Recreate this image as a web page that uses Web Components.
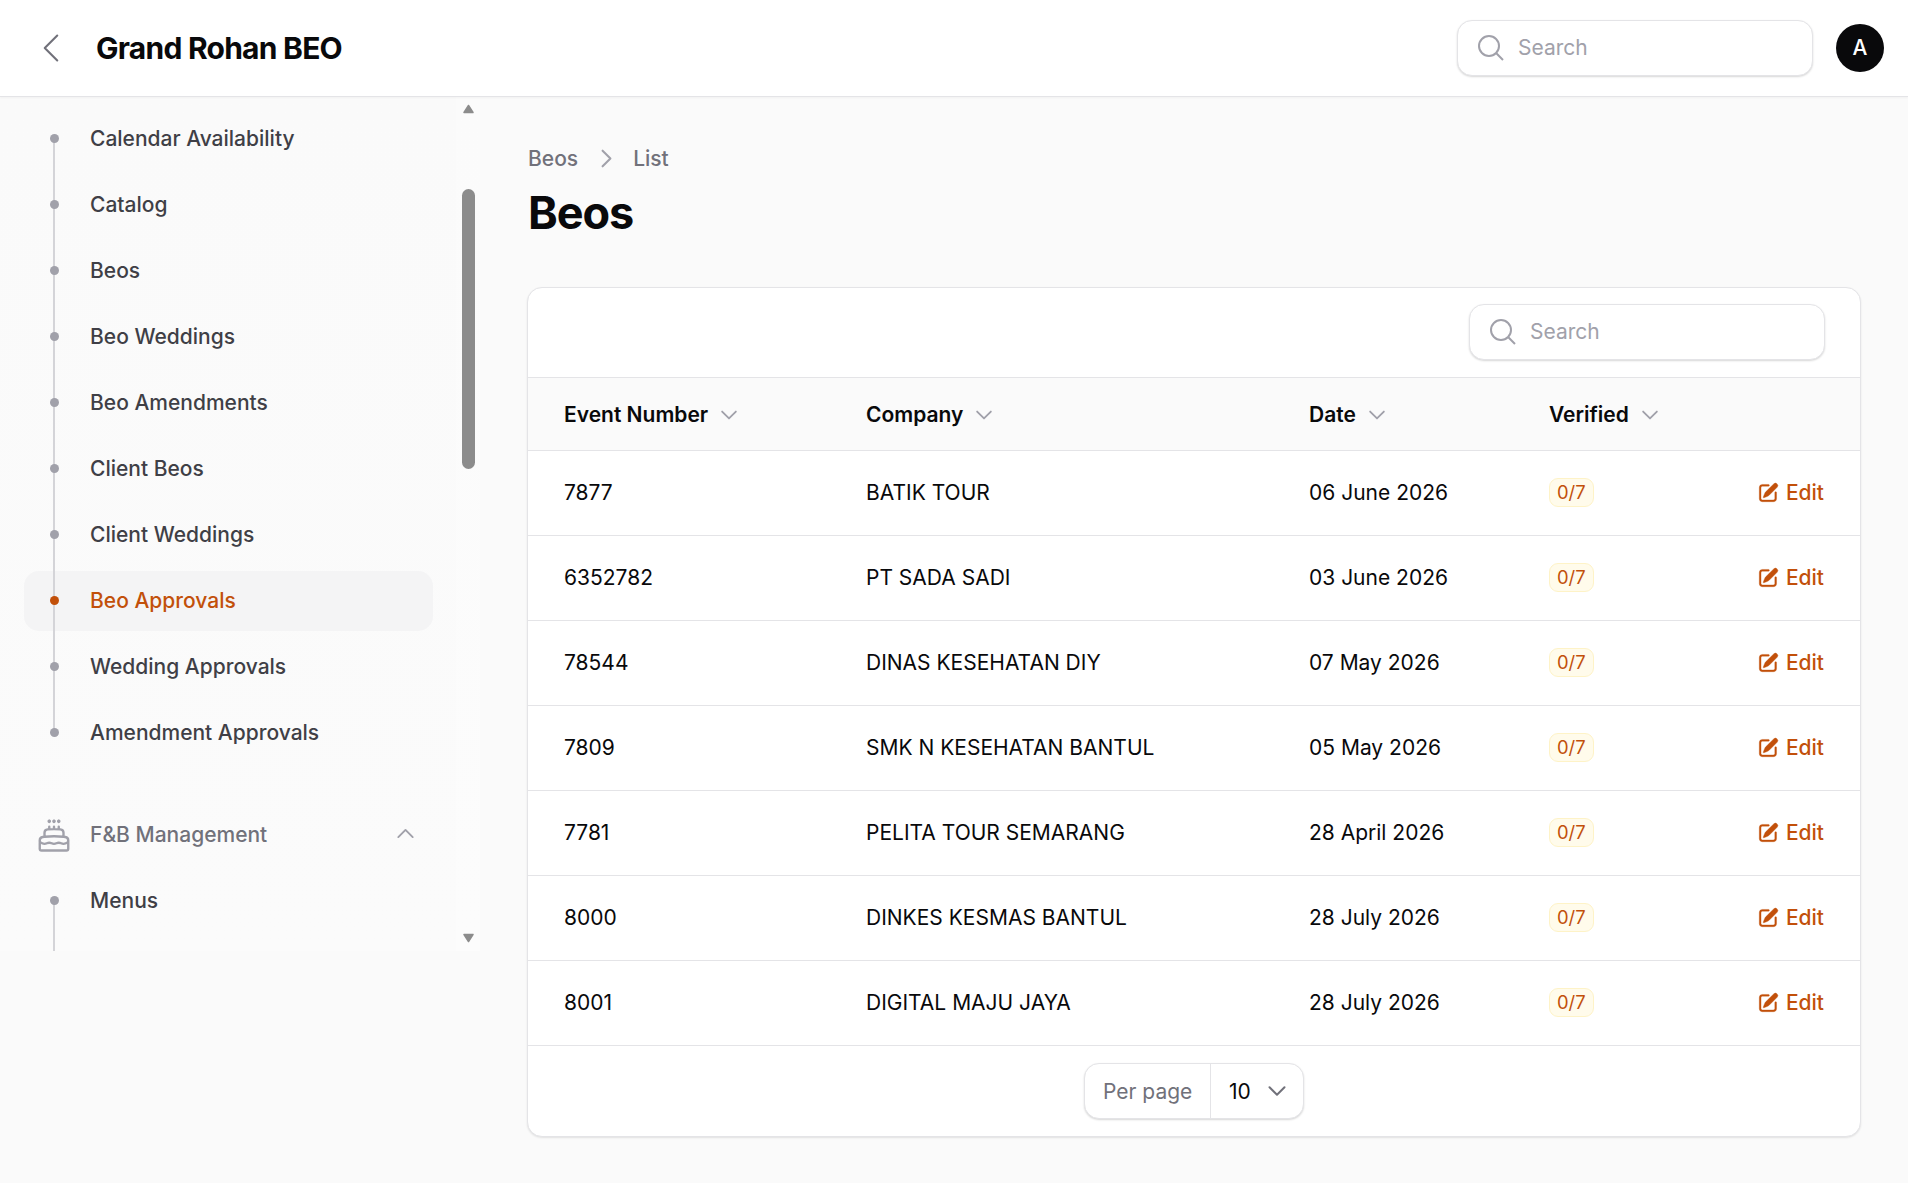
<!DOCTYPE html>
<html>
<head>
<meta charset="utf-8">
<title>Beos</title>
<style>
  html, body { margin: 0; height: 100%; background: #fafafa; overflow: hidden; }
  body { font-family: Inter, "Liberation Sans", sans-serif; font-size: 21px; color: #09090b; }
  .shell { display: flex; }
</style>
</head>
<body>
<app-topbar title="Grand Rohan BEO"></app-topbar>
<div class="shell">
  <side-nav>
    <nav-item first>Calendar Availability</nav-item>
    <nav-item>Catalog</nav-item>
    <nav-item>Beos</nav-item>
    <nav-item>Beo Weddings</nav-item>
    <nav-item>Beo Amendments</nav-item>
    <nav-item>Client Beos</nav-item>
    <nav-item>Client Weddings</nav-item>
    <nav-item active>Beo Approvals</nav-item>
    <nav-item>Wedding Approvals</nav-item>
    <nav-item last>Amendment Approvals</nav-item>
    <nav-group>F&amp;B Management</nav-group>
    <nav-item first tail>Menus</nav-item>
  </side-nav>
  <page-main>
    <beo-table>
      <beo-row head number="Event Number" company="Company" date="Date" verified="Verified"></beo-row>
      <beo-row number="7877" company="BATIK TOUR" date="06 June 2026" verified="0/7"></beo-row>
      <beo-row number="6352782" company="PT SADA SADI" date="03 June 2026" verified="0/7"></beo-row>
      <beo-row number="78544" company="DINAS KESEHATAN DIY" date="07 May 2026" verified="0/7"></beo-row>
      <beo-row number="7809" company="SMK N KESEHATAN BANTUL" date="05 May 2026" verified="0/7"></beo-row>
      <beo-row number="7781" company="PELITA TOUR SEMARANG" date="28 April 2026" verified="0/7"></beo-row>
      <beo-row number="8000" company="DINKES KESMAS BANTUL" date="28 July 2026" verified="0/7"></beo-row>
      <beo-row number="8001" company="DIGITAL MAJU JAYA" date="28 July 2026" verified="0/7"></beo-row>
    </beo-table>
  </page-main>
</div>
<script>
const chevron = (d, size, color, sw) => `<svg width="${size}" height="${size}" viewBox="0 0 24 24" fill="none" stroke="${color}" stroke-width="${sw}" stroke-linecap="round" stroke-linejoin="round"><path d="${d}"/></svg>`;
const CHEV_DOWN = 'm19.5 8.25-7.5 7.5-7.5-7.5';
const CHEV_UP = 'm4.5 15.75 7.5-7.5 7.5 7.5';
const CHEV_LEFT = 'M15.75 19.5 8.25 12l7.5-7.5';
const CHEV_RIGHT = 'm8.25 4.5 7.5 7.5-7.5 7.5';

class SearchBox extends HTMLElement {
  constructor() {
    super();
    this.attachShadow({ mode: 'open' });
    this.shadowRoot.innerHTML = `
      <style>
        :host { display: block; width: 356px; height: 56px; box-sizing: border-box; }
        .box { height: 100%; box-sizing: border-box; display: flex; align-items: center; gap: 11px; padding: 0 0 0 17px;
          background: #fff; border: 1px solid #e4e4e7; border-radius: 15px; box-shadow: 0 1px 2px rgba(0,0,0,.16); }
        svg { flex: none; display: block; }
        span { color: #a1a1aa; font-size: 21px; }
      </style>
      <div class="box">
        <svg width="32" height="32" viewBox="0 0 24 24" fill="none" stroke="#a1a1aa" stroke-width="1.5"><path d="m21 21-5.197-5.197m0 0A7.5 7.5 0 1 0 5.196 5.196a7.5 7.5 0 0 0 10.607 10.607Z"/></svg>
        <span>Search</span>
      </div>`;
  }
}
customElements.define('search-box', SearchBox);

class AppTopbar extends HTMLElement {
  constructor() {
    super();
    this.attachShadow({ mode: 'open' });
    this.shadowRoot.innerHTML = `
      <style>
        :host { display: flex; align-items: center; height: 97px; box-sizing: border-box; background: #fff;
          border-bottom: 1px solid #e4e4e7; padding: 0 24px 1px 31px; box-shadow: 0 1px 2px rgba(0,0,0,.04); position: relative; }
        svg { display: block; flex: none; }
        h1 { margin: 0 0 0 25px; font-size: 30px; font-weight: 700; letter-spacing: -.75px; color: #09090b; flex: 1; }
        .avatar { width: 48px; height: 48px; border-radius: 50%; background: #09090b; color: #fff; margin-left: 23px;
          display: flex; align-items: center; justify-content: center; font-size: 21px; font-weight: 500; }
      </style>
      ${chevron(CHEV_LEFT, 40, '#71717a', 1.25)}
      <h1></h1>
      <search-box></search-box>
      <div class="avatar">A</div>`;
    this.shadowRoot.querySelector('h1').textContent = this.getAttribute('title') || '';
  }
}
customElements.define('app-topbar', AppTopbar);

class SideNav extends HTMLElement {
  constructor() {
    super();
    this.attachShadow({ mode: 'open' });
    this.shadowRoot.innerHTML = `
      <style>
        :host { display: flex; flex: none; width: 480px; height: 854px; }
        nav { width: 456px; box-sizing: border-box; padding: 12px 23px 0 24px; overflow: hidden; display: flex; flex-direction: column; gap: 6px;
          background: linear-gradient(#fafafa, #fbfbfb); }
        .bar { width: 24px; box-sizing: border-box; padding-left: 1px; background: linear-gradient(#fbfbfb, #fcfcfc); display: flex; flex-direction: column; align-items: center; }
        .bar svg { display: block; flex: none; }
        .up { margin-top: 7px; }
        .down { margin-top: auto; margin-bottom: 8px; }
        .thumb { width: 13px; height: 280px; margin-top: 75px; border-radius: 7px; background: #8c8c8c; flex: none; }
      </style>
      <nav><slot></slot></nav>
      <div class="bar">
        <svg class="up" width="13" height="10" viewBox="0 0 13 10"><path d="M6.5 1.5 11 8.5H2Z" fill="#8c8c8c" stroke="#8c8c8c" stroke-width="1.5" stroke-linejoin="round"/></svg>
        <div class="thumb"></div>
        <svg class="down" width="13" height="10" viewBox="0 0 13 10"><path d="M6.5 8.5 11 1.5H2Z" fill="#8c8c8c" stroke="#8c8c8c" stroke-width="1.5" stroke-linejoin="round"/></svg>
      </div>`;
  }
}
customElements.define('side-nav', SideNav);

class NavItem extends HTMLElement {
  constructor() {
    super();
    this.attachShadow({ mode: 'open' });
    this.shadowRoot.innerHTML = `
      <style>
        :host { display: flex; align-items: center; height: 60px; box-sizing: border-box; padding: 0 0 2px 66px; flex: none; border-radius: 15px;
          position: relative; color: #3f3f46; font-size: 21px; font-weight: 500; }
        :host([active]) { background: #f4f4f5; color: #c2500a; }
        .line { position: absolute; left: 29px; width: 2px; top: -3px; bottom: -3px; background: #d4d4d8; }
        :host([first]) .line { top: 50%; }
        :host([last]) .line { bottom: 50%; }
        :host([tail]) .line { bottom: -60px; }
        .dot { position: absolute; left: 26px; top: 50%; width: 9px; height: 9px; margin-top: -5px; border-radius: 50%; background: #a1a1aa; }
        :host([active]) .dot { background: #c2500a; }
      </style>
      <span class="line"></span><span class="dot"></span><slot></slot>`;
  }
}
customElements.define('nav-item', NavItem);

class NavGroup extends HTMLElement {
  constructor() {
    super();
    this.attachShadow({ mode: 'open' });
    this.shadowRoot.innerHTML = `
      <style>
        :host { display: flex; align-items: center; height: 60px; flex: none; margin-top: 36px; color: #71717a; font-size: 21px; font-weight: 500; }
        svg { display: block; flex: none; }
        .cake { margin: 0 17px 0 11px; }
        .label { flex: 1; margin-top: -2px; }
        .toggle { margin: -3px 16px 0 0; }
      </style>
      <svg class="cake" width="38" height="38" viewBox="0 0 24 24" fill="none" stroke="#a1a1aa" stroke-width="1.5" stroke-linecap="round" stroke-linejoin="round"><path d="M12 8.25v-1.5m0 1.5c-1.355 0-2.697.056-4.024.166C6.845 8.51 6 9.473 6 10.608v2.513m6-4.871c1.355 0 2.697.056 4.024.166C17.155 8.51 18 9.473 18 10.608v2.513M15 8.25v-1.5m-6 1.5v-1.5m12 9.75-1.5.75a3.354 3.354 0 0 1-3 0 3.354 3.354 0 0 0-3 0 3.354 3.354 0 0 1-3 0 3.354 3.354 0 0 0-3 0 3.354 3.354 0 0 1-3 0L3 16.5m15-3.379a48.474 48.474 0 0 0-6-.371c-2.032 0-4.034.126-6 .371m12 0c.39.049.777.102 1.163.16 1.07.16 1.837 1.094 1.837 2.175v5.169c0 .621-.504 1.125-1.125 1.125H4.125A1.125 1.125 0 0 1 3 20.625v-5.17c0-1.08.768-2.014 1.837-2.174A47.78 47.78 0 0 1 6 13.12M12.265 3.11a.375.375 0 1 1-.53 0L12 2.845l.265.265Zm-3 0a.375.375 0 1 1-.53 0L9 2.845l.265.265Zm6 0a.375.375 0 1 1-.53 0L15 2.845l.265.265Z"/></svg>
      <span class="label"><slot></slot></span>
      <span class="toggle">${chevron(CHEV_UP, 23, '#a1a1aa', 2)}</span>`;
  }
}
customElements.define('nav-group', NavGroup);

class PageMain extends HTMLElement {
  constructor() {
    super();
    this.attachShadow({ mode: 'open' });
    this.shadowRoot.innerHTML = `
      <style>
        :host { display: block; flex: 1; min-width: 0; padding: 49px 47px 0 48px; }
        .crumbs { display: flex; align-items: center; height: 25px; gap: 15px; color: #71717a; font-size: 21px; font-weight: 500; }
        .crumbs svg { display: block; margin: 0 -1px 0 1px; }
        h2 { margin: 17px 0 0; font-size: 45px; line-height: 50px; font-weight: 700; letter-spacing: -1.1px; color: #09090b; }
        .body { margin-top: 49px; }
      </style>
      <div class="crumbs"><span>Beos</span>${chevron(CHEV_RIGHT, 25, '#a1a1aa', 2)}<span>List</span></div>
      <h2>Beos</h2>
      <div class="body"><slot></slot></div>`;
  }
}
customElements.define('page-main', PageMain);

class BeoTable extends HTMLElement {
  constructor() {
    super();
    this.attachShadow({ mode: 'open' });
    this.shadowRoot.innerHTML = `
      <style>
        :host { display: block; margin-left: -1px; background: #fff; border: 1px solid #e4e4e7; border-radius: 15px; box-shadow: 0 1px 2px rgba(0,0,0,.1); overflow: hidden; }
        .tools { display: flex; justify-content: flex-end; align-items: center; height: 89px; box-sizing: content-box; padding-right: 35px; border-bottom: 1px solid #e4e4e7; }
        .tools search-box { margin-top: -2px; }
        .foot { display: flex; justify-content: center; align-items: center; height: 90px; }
      </style>
      <div class="tools"><search-box></search-box></div>
      <slot></slot>
      <div class="foot"><per-page></per-page></div>`;
  }
}
customElements.define('beo-table', BeoTable);

class BeoRow extends HTMLElement {
  constructor() {
    super();
    this.attachShadow({ mode: 'open' });
    const head = this.hasAttribute('head');
    const cell = name => {
      const t = this.getAttribute(name);
      return head ? `<div class="cell sort"><b>${t}</b>${chevron(CHEV_DOWN, 22, '#a1a1aa', 2)}</div>` : `<div class="cell">${t}</div>`;
    };
    const verified = head ? cell('verified') : `<div class="cell"><span class="badge">${this.getAttribute('verified')}</span></div>`;
    const action = head ? '<div></div>' : `<div class="cell edit"><svg width="23" height="23" viewBox="0 0 20 20" fill="currentColor" stroke="currentColor" stroke-width=".3"><path d="m5.433 13.917 1.262-3.155A4 4 0 0 1 7.58 9.42l6.92-6.918a2.121 2.121 0 0 1 3 3l-6.92 6.918c-.383.383-.84.685-1.343.886l-3.154 1.262a.5.5 0 0 1-.65-.65Z"/><path d="M3.5 5.75c0-.69.56-1.25 1.25-1.25H10A.75.75 0 0 0 10 3H4.75A2.75 2.75 0 0 0 2 5.75v9.5A2.75 2.75 0 0 0 4.75 18h9.5A2.75 2.75 0 0 0 17 15.25V10a.75.75 0 0 0-1.5 0v5.25c0 .69-.56 1.25-1.25 1.25h-9.5c-.69 0-1.25-.56-1.25-1.25v-9.5Z"/></svg><span>Edit</span></div>`;
    this.shadowRoot.innerHTML = `
      <style>
        :host { display: grid; grid-template-columns: 302px 443px 240px 1fr auto; align-items: center; height: 85px; box-sizing: border-box;
          padding: 0 36px 2px; border-bottom: 1px solid #e4e4e7; font-size: 21px; color: #09090b; }
        :host([head]) { height: 73px; padding-bottom: 0; background: #fafafa; }
        .cell { display: flex; align-items: center; white-space: nowrap; }
        .sort { gap: 10px; }
        .sort svg { margin-top: 2px; }
        b { font-weight: 600; }
        .badge { box-sizing: border-box; height: 29px; padding: 0 7px; display: inline-flex; align-items: center; border: 1px solid #fef3c7;
          border-radius: 9px; background: #fffbeb; color: #c2500a; font-size: 18.4px; }
        .edit { gap: 6px; color: #c2500a; font-weight: 500; }
        svg { display: block; flex: none; }
      </style>
      ${cell('number')}${cell('company')}${cell('date')}${verified}${action}`;
  }
}
customElements.define('beo-row', BeoRow);

class PerPage extends HTMLElement {
  constructor() {
    super();
    this.attachShadow({ mode: 'open' });
    this.shadowRoot.innerHTML = `
      <style>
        :host { display: flex; width: 220px; height: 56px; box-sizing: border-box; background: #fff; border: 1px solid #e4e4e7; border-radius: 15px;
          box-shadow: 0 1px 2px rgba(0,0,0,.16); font-size: 21px; }
        .label { width: 126px; box-sizing: border-box; display: flex; align-items: center; padding-left: 18px; color: #71717a; border-right: 1px solid #e4e4e7; }
        .value { flex: 1; display: flex; align-items: center; gap: 14px; padding-left: 18px; color: #09090b; }
        svg { display: block; }
      </style>
      <div class="label">Per page</div>
      <div class="value"><span>10</span>${chevron(CHEV_DOWN, 24, '#71717a', 2)}</div>`;
  }
}
customElements.define('per-page', PerPage);
</script>
</body>
</html>
